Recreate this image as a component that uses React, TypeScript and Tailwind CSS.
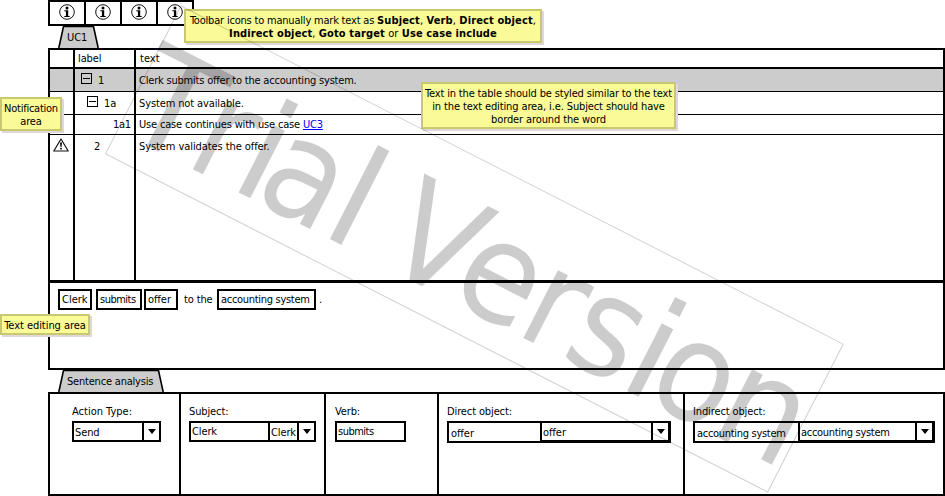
import type { ReactNode } from "react";

function InfoIcon() {
  return (
    <svg width="16" height="16" viewBox="0 0 16 16" className="block">
      <circle cx="8" cy="8" r="7.3" fill="#fff" stroke="#111" strokeWidth="1" />
      <circle cx="8" cy="4" r="1.5" fill="#000" />
      <path d="M5.3 6.2H9.2V12H10.7V13H5.3V12H6.9V7.2H5.3Z" fill="#000" />
    </svg>
  );
}

function Minus() {
  return (
    <svg width="11" height="11" viewBox="0 0 11 11" className="block shrink-0">
      <rect x="0.5" y="0.5" width="10" height="10" fill="none" stroke="#000" />
      <path d="M2 5.5H9" stroke="#000" />
    </svg>
  );
}

function Warning() {
  return (
    <svg width="16" height="14" viewBox="0 0 16 14" className="block">
      <path d="M8 1L15.2 13H0.8Z" fill="#fff" stroke="#111" strokeWidth="1.2" strokeLinejoin="round" />
      <path d="M7 4.4H9L8.5 9H7.5Z" fill="#000" />
      <rect x="7.2" y="9.8" width="1.6" height="1.7" fill="#000" />
    </svg>
  );
}

function Arrow() {
  return (
    <div className="flex h-full w-[17px] shrink-0 items-center justify-center border-l-2 border-black">
      <svg width="8" height="5" viewBox="0 0 8 5" className="block">
        <path d="M0 0H8L4 5Z" fill="#000" />
      </svg>
    </div>
  );
}

function Tab({ width, children }: { width: number; children: ReactNode }) {
  return (
    <div className="relative ml-[10px] h-[22px] pl-[9px]" style={{ width }}>
      <svg width={width} height="22" className="absolute top-0 left-0">
        <path d={`M0.8 22L5.5 0.5H${width - 5.5}L${width - 0.8} 22`} fill="#ccc" stroke="#000" strokeWidth="1.6" />
      </svg>
      <div className="relative pt-[5px]">{children}</div>
    </div>
  );
}

function Row({ mark, label, text, className, pt }: { mark?: ReactNode; label: ReactNode; text: ReactNode; className: string; pt: string }) {
  return (
    <div className={`flex ${className}`}>
      <div className="flex w-[23px] justify-center">{mark}</div>
      <div className={`flex w-[61px] border-l-2 border-black ${pt}`}>{label}</div>
      <div className={`grow border-l-2 border-black pl-[3px] ${pt}`}>{text}</div>
    </div>
  );
}

function Note({ className, children }: { className: string; children: ReactNode }) {
  return (
    <div className={`absolute border-2 border-[#c8c870] bg-[#fafa96] text-center shadow-[2px_2px_0_#e0d8d8] ${className}`}>
      {children}
    </div>
  );
}

function Chip({ className, children }: { className: string; children: ReactNode }) {
  return <div className={`h-[21px] border-2 border-black pt-[2px] pl-[2px] ${className}`}>{children}</div>;
}

// Each watermark letter: character, left and right edge along the baseline,
// and the left and right ink edges of the glyph in em.
const SIZE = 139;
const LETTERS: [string, number, number, number, number][] = [
  ["T", -1, 81, -0.003, 0.614],
  ["r", 84.7, 124.7, 0.091, 0.411],
  ["i", 136, 149, 0.094, 0.184],
  ["a", 157.5, 216.6, 0.06, 0.522],
  ["l", 238.5, 251.3, 0.094, 0.184],
  ["V", 292.8, 377.3, 0.008, 0.676],
  ["e", 376, 441.4, 0.055, 0.562],
  ["r", 456, 496, 0.091, 0.411],
  ["s", 502, 556, 0.054, 0.472],
  ["i", 572.3, 585.3, 0.094, 0.184],
  ["o", 596, 660, 0.055, 0.557],
  ["n", 674, 735, 0.091, 0.549],
];

function Watermark() {
  return (
    <svg width="945" height="496" className="pointer-events-none absolute top-0 left-0">
      <g transform="translate(181 6) rotate(27.05)">
        <rect x="0" y="0" width="743.5" height="166" fill="none" stroke="#000" strokeOpacity="0.18" />
        <g fontSize={SIZE} fontFamily="'DejaVu Sans',sans-serif" letterSpacing="0" fill="#000" fillOpacity="0.2">
          {LETTERS.map(([ch, left, right, inkL, inkR]) => {
            const sx = (right - left) / ((inkR - inkL) * SIZE);
            return (
              <text key={left} transform={`translate(${left - inkL * SIZE * sx} 139.9) scale(${sx} 1)`}>
                {ch}
              </text>
            );
          })}
        </g>
      </g>
    </svg>
  );
}

export default function App() {
  return (
    <div className="relative h-[496px] w-[945px] overflow-hidden bg-white font-['DejaVu_Sans_Condensed','DejaVu_Sans',sans-serif] text-[11px] leading-[13px] tracking-[-0.12px] whitespace-nowrap text-black">
      <div className="ml-[48px] flex h-full w-[897px] flex-col">
        <div className="flex h-[26px] w-[146px] border-2 border-black">
          {[0, 1, 2, 3].map((i) => (
            <div key={i} className="flex w-[36px] justify-center border-r-2 border-black pt-[2px] last:w-[34px] last:border-r-0">
              <InfoIcon />
            </div>
          ))}
        </div>
        <Tab width={41}>UC1</Tab>

        <div className="flex h-[235px] flex-col border-x-2 border-t-2 border-b-3 border-black">
          <Row className="h-[19px] border-b-2 border-black" pt="pt-[2px]" label={<span className="pl-[3px]">label</span>} text={<span className="pl-px tracking-normal">text</span>} />
          <Row
            className="h-[23px] border-b border-black bg-[#ccc]"
            pt="pt-[5px]"
            label={<><div className="-mt-px pr-[6px] pl-[6px]"><Minus /></div>1</>}
            text={<span className="tracking-[-0.2px]">Clerk submits offer to the accounting system.</span>}
          />
          <Row
            className="h-[23px] border-b border-black"
            pt="pt-[5px]"
            label={<><div className="-mt-px pr-[6px] pl-[12px]"><Minus /></div>1a</>}
            text="System not available."
          />
          <Row
            className="h-[20px] border-b border-black"
            pt="pt-[3px]"
            label={<span className="pl-[38px] tracking-[-0.3px]">1a1</span>}
            text={<span className="tracking-[-0.17px]">Use case continues with use case <a className="text-[#0000ff] underline">UC3</a></span>}
          />
          <Row className="grow" pt="pt-[5px]" mark={<div className="-ml-px pt-[3px]"><Warning /></div>} label={<span className="pl-[19px]">2</span>} text={<span className="tracking-[-0.08px]">System validates the offer.</span>} />
        </div>

        <div className="flex h-[87px] border-x-2 border-b-2 border-black pt-[6px] pl-[8px]">
          <Chip className="w-[34px] tracking-normal">Clerk</Chip>
          <Chip className="ml-[4px] w-[46px] tracking-[-0.5px]">submits</Chip>
          <Chip className="ml-[2px] w-[34px] tracking-normal">offer</Chip>
          <span className="ml-[6px] w-[33px] pt-[4px]">to the</span>
          <Chip className="w-[99px] tracking-[-0.3px]">accounting system</Chip>
          <span className="pt-[4px] pl-[3px]">.</span>
        </div>
        <Tab width={106}><span className="tracking-[-0.2px]">Sentence analysis</span></Tab>

        <div className="flex h-[104px] border-2 border-black pt-0">
          <div className="w-[129px] pt-[11px] pl-[22px]">
            <div className="tracking-normal">Action Type:</div>
            <div className="mt-[3px] flex h-[21px] w-[89px] border-2 border-black">
              <div className="grow pt-[3px] pl-px">Send</div>
              <Arrow />
            </div>
          </div>
          <div className="w-[145px] border-l-2 border-black pt-[11px] pl-[8px]">
            <div>Subject:</div>
            <div className="mt-[3px] flex h-[21px] w-[127px] border-2 border-black">
              <div className="w-[77px] pt-[2px] pl-px">Clerk</div>
              <div className="grow border-l-2 border-black pt-[3px] pl-px">Clerk</div>
              <Arrow />
            </div>
          </div>
          <div className="w-[113px] border-l-2 border-black pt-[11px] pl-[9px]">
            <div>Verb:</div>
            <div className="mt-[3px] h-[21px] w-[71px] border-2 border-black pt-[2px] pl-px tracking-[-0.5px]">submits</div>
          </div>
          <div className="w-[246px] border-l-2 border-black pt-[11px] pl-[8px]">
            <div>Direct object:</div>
            <div className="mt-[3px] flex h-[22px] w-[224px] border-2 border-black tracking-normal">
              <div className="w-[91px] pt-[4px] pl-[2px]">offer</div>
              <div className="flex grow border-r border-b border-l-2 border-black">
                <div className="grow pt-[3px] pl-px">offer</div>
                <Arrow />
              </div>
            </div>
          </div>
          <div className="w-[260px] border-l-2 border-black pt-[11px] pl-[8px]">
            <div>Indirect object:</div>
            <div className="mt-[3px] flex h-[22px] w-[242px] border-2 border-black tracking-[-0.3px]">
              <div className="w-[103px] pt-[4px] pl-[2px]">accounting system</div>
              <div className="flex grow border-r border-b border-l-2 border-black">
                <div className="grow pt-[3px] pl-px">accounting system</div>
                <Arrow />
              </div>
            </div>
          </div>
        </div>
      </div>

      <Note className="top-[9px] left-[184px] h-[34px] w-[358px] pt-[3px]">
        <div className="tracking-[0.13px]">
          <span className="tracking-[-0.2px]">Toolbar icons to manually mark text as </span>
          <b>Subject</b>, <b>Verb</b>, <b>Direct object</b>,
        </div>
        <div className="tracking-[0.12px]">
          <b>Indirect object</b>, <b>Goto target</b> or <b>Use case include</b>
        </div>
      </Note>
      <Note className="top-[97px] left-0 h-[34px] w-[62px] pt-[3px]">
        <div className="tracking-[-0.25px]">Notification</div>
        <div>area</div>
      </Note>
      <Note className="top-[82px] left-[421px] h-[47px] w-[255px] pt-[3px]">
        <div className="tracking-[-0.16px]">Text in the table should be styled similar to the text</div>
        <div>in the text editing area, i.e. Subject should have</div>
        <div>border around the word</div>
      </Note>
      <Note className="top-[314px] left-0 h-[21px] w-[90px] pt-[3px]"><span className="tracking-[-0.05px]">Text editing area</span></Note>
      <Watermark />
    </div>
  );
}
